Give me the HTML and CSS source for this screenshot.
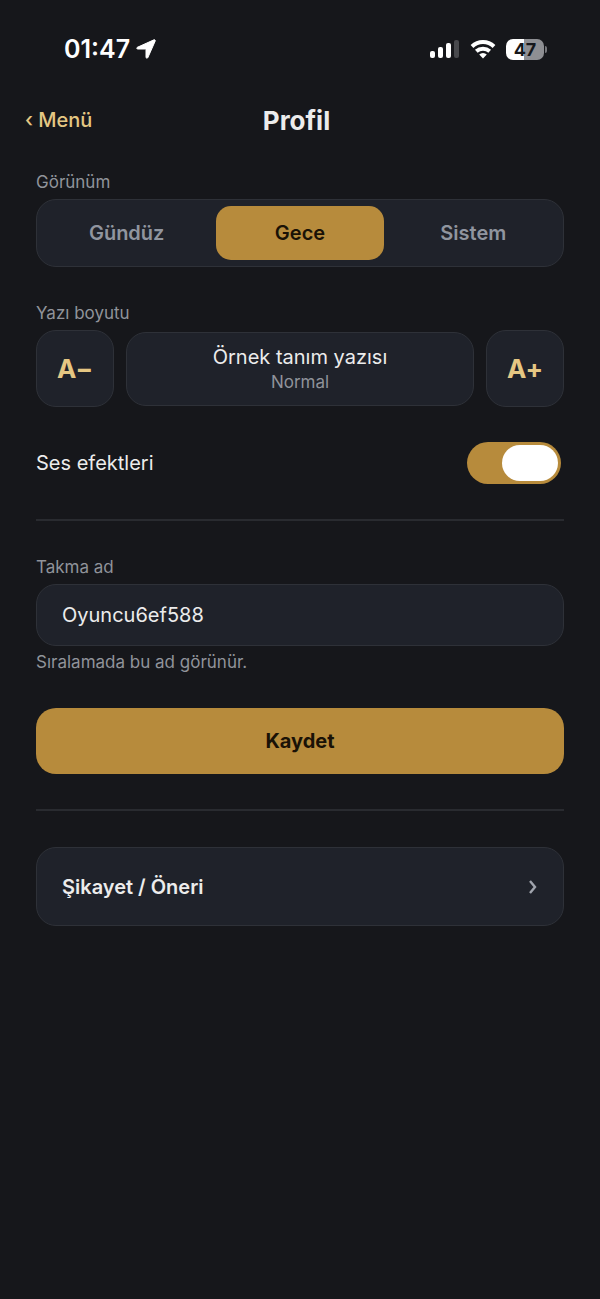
FILE: index.html
```html
<!DOCTYPE html>
<html lang="tr">
<head>
    <meta charset="UTF-8">
    <meta name="viewport" content="width=device-width, initial-scale=1.0">
    <title>Profil</title>
    <link rel="stylesheet" href="styles.css">
</head>
<body>
    <div class="status-bar">
        <div class="status-time">
            <span>01:47</span>
            <svg width="20" height="20" viewBox="0 0 20 20" fill="#fff" stroke="#fff" stroke-width="1" stroke-linejoin="round" aria-hidden="true">
                <path d="M18 .8 1.400 8.300c-1 .5-.8 1.700.4 1.700h7.700c.3 0 .5.2.5.5v7.600c0 1.300 1.400 1.500 1.900.4L19.200 2c.3-.8-.4-1.500-1.200-1.200z"/>
            </svg>
        </div>
        <div class="status-icons">
            <svg width="30" height="20" viewBox="0 0 30 20" fill="#fff" aria-hidden="true">
                <rect x="0" y="12" width="5" height="7" rx="2"/>
                <rect x="8" y="8" width="5" height="11" rx="2"/>
                <rect x="16" y="4" width="5" height="15" rx="2"/>
                <rect x="24" y="1" width="5" height="18" rx="2" fill="#48494d"/>
            </svg>
            <svg width="26" height="20" viewBox="0 0 26 20" fill="none" stroke="#fff" stroke-width="4" aria-hidden="true">
                <path d="M2 7.500a16 16 0 0 1 22 0"/>
                <path d="M6.300 12.300a10 10 0 0 1 13.400 0"/>
                <path d="M13 19.500l-3.800-3.900a5.400 5.400 0 0 1 7.600 0z" fill="#fff" stroke="none"/>
            </svg>
            <div class="battery"><span>47</span></div>
        </div>
    </div>

    <header class="header">
        <a class="back-link" href="#">‹ Menü</a>
        <h1>Profil</h1>
    </header>

    <main class="content">
        <div class="label" id="theme-label">Görünüm</div>
        <div class="segment" role="group" aria-labelledby="theme-label">
            <button class="segment-button" type="button">Gündüz</button>
            <button class="segment-button active" type="button">Gece</button>
            <button class="segment-button" type="button">Sistem</button>
        </div>

        <div class="label" id="size-label">Yazı boyutu</div>
        <div class="font-size" role="group" aria-labelledby="size-label">
            <button class="size-button" type="button">A−</button>
            <div class="size-preview">
                <div class="preview-text">Örnek tanım yazısı</div>
                <div class="preview-name">Normal</div>
            </div>
            <button class="size-button" type="button">A+</button>
        </div>

        <div class="sound-row">
            <label for="sound">Ses efektleri</label>
            <input class="switch" type="checkbox" role="switch" id="sound" checked>
        </div>

        <hr class="divider">

        <form id="form-profile">
            <label class="label" for="nickname">Takma ad</label>
            <input class="text-input" type="text" id="nickname" value="Oyuncu6ef588">
            <p class="hint">Sıralamada bu ad görünür.</p>
            <button class="save-button" type="submit">Kaydet</button>
        </form>

        <hr class="divider">

        <button class="feedback-button" type="button">
            <span>Şikayet / Öneri</span>
            <svg width="10" height="14" viewBox="0 0 10 14" fill="none" stroke="#a0a4ad" stroke-width="2.400" aria-hidden="true">
                <path d="M2 1l5 6-5 6"/>
            </svg>
        </button>
    </main>
</body>
</html>
```
FILE: styles.css
```css
* {
    box-sizing: border-box;
}

body {
    margin: 0;
    min-height: 100vh;
    background-color: #16171b;
    color: #ececec;
    font-family: Inter, "Liberation Sans", sans-serif;
    font-size: 20px;
}

button,
input {
    font-family: inherit;
    margin: 0;
}

button {
    cursor: pointer;
}

/* Saat, sinyal ve pil */
.status-bar {
    display: flex;
    justify-content: space-between;
    align-items: center;
    height: 98px;
    padding: 0 56px 0 64px;
    color: #fff;
}

.status-time,
.status-icons {
    display: flex;
    align-items: center;
}

.status-time {
    gap: 6px;
    font-size: 25px;
    font-weight: 600;
}

.status-icons {
    gap: 10px;
}

.battery {
    position: relative;
    width: 38px;
    height: 21px;
    border-radius: 7px;
    background: linear-gradient(to right, #fff 47%, #8e8f93 47%);
    color: #16171b;
    font-size: 18px;
    font-weight: 700;
    line-height: 21px;
    text-align: center;
}

.battery::after {
    content: "";
    position: absolute;
    top: 7px;
    right: -3px;
    width: 2px;
    height: 7px;
    border-radius: 0 3px 3px 0;
    background-color: #77787c;
}

/* Üst başlık */
.header {
    display: grid;
    grid-template-columns: 1fr auto 1fr;
    align-items: center;
    height: 44px;
    padding: 0 32px 0 25px;
}

.header h1 {
    margin: 0;
    font-size: 26px;
    font-weight: 700;
}

.back-link {
    color: #e5c783;
    font-weight: 500;
    text-decoration: none;
}

.content {
    padding: 30px 36px;
}

.label {
    display: block;
    margin-bottom: 7px;
    color: #90939a;
    font-size: 17px;
    line-height: 20px;
}

/* Gündüz / Gece / Sistem seçimi */
.segment {
    display: flex;
    gap: 6px;
    height: 68px;
    margin-bottom: 36px;
    padding: 6px;
    background-color: #1f222a;
    border: 1px solid #2e3138;
    border-radius: 20px;
}

.segment-button {
    flex: 1;
    background: none;
    border: none;
    border-radius: 15px;
    color: #90959f;
    font-size: 20px;
    font-weight: 600;
}

.segment-button.active {
    background-color: #b78b3c;
    color: #1a1206;
}

/* Yazı boyutu */
.font-size {
    display: flex;
    align-items: center;
    gap: 12px;
    margin-bottom: 35px;
}

.size-button {
    width: 78px;
    height: 77px;
    padding: 0;
    background-color: #1f222a;
    border: 1px solid #2e3138;
    border-radius: 20px;
    color: #e5c783;
    font-size: 26px;
    font-weight: 700;
    font-variant-ligatures: no-contextual;
}

.size-preview {
    flex: 1;
    padding: 11px;
    background-color: #1f222a;
    border: 1px solid #2e3138;
    border-radius: 20px;
    text-align: center;
}

.preview-text {
    font-size: 20px;
    line-height: 26px;
}

.preview-name {
    color: #90939a;
    font-size: 17px;
    line-height: 24px;
}

.sound-row {
    display: flex;
    justify-content: space-between;
    align-items: center;
    padding-right: 3px;
}

.switch {
    appearance: none;
    position: relative;
    width: 94px;
    height: 42px;
    border-radius: 21px;
    background-color: #b78b3c;
    cursor: pointer;
}

.switch::before {
    content: "";
    position: absolute;
    top: 3px;
    left: 3px;
    width: 56px;
    height: 36px;
    border-radius: 18px;
    background-color: #fff;
}

.switch:checked::before {
    left: auto;
    right: 3px;
}

.divider {
    height: 2px;
    margin: 35px 0 36px;
    background-color: #292b30;
    border: none;
}

/* Takma ad */
.text-input {
    display: block;
    width: 100%;
    height: 62px;
    padding: 0 25px;
    background-color: #1f222a;
    border: 1px solid #2e3138;
    border-radius: 20px;
    color: #ececec;
    font-size: 20px;
}

.hint {
    margin: 6px 0 36px;
    color: #90939a;
    font-size: 17px;
    line-height: 20px;
}

.save-button {
    display: block;
    width: 100%;
    height: 66px;
    background-color: #b78b3c;
    border: none;
    border-radius: 20px;
    color: #1a1206;
    font-size: 20px;
    font-weight: 700;
}

.feedback-button {
    display: flex;
    justify-content: space-between;
    align-items: center;
    width: 100%;
    height: 79px;
    padding: 0 25px;
    background-color: #1f222a;
    border: 1px solid #2e3138;
    border-radius: 20px;
    color: #ececec;
    font-size: 20px;
    font-weight: 600;
}
```
